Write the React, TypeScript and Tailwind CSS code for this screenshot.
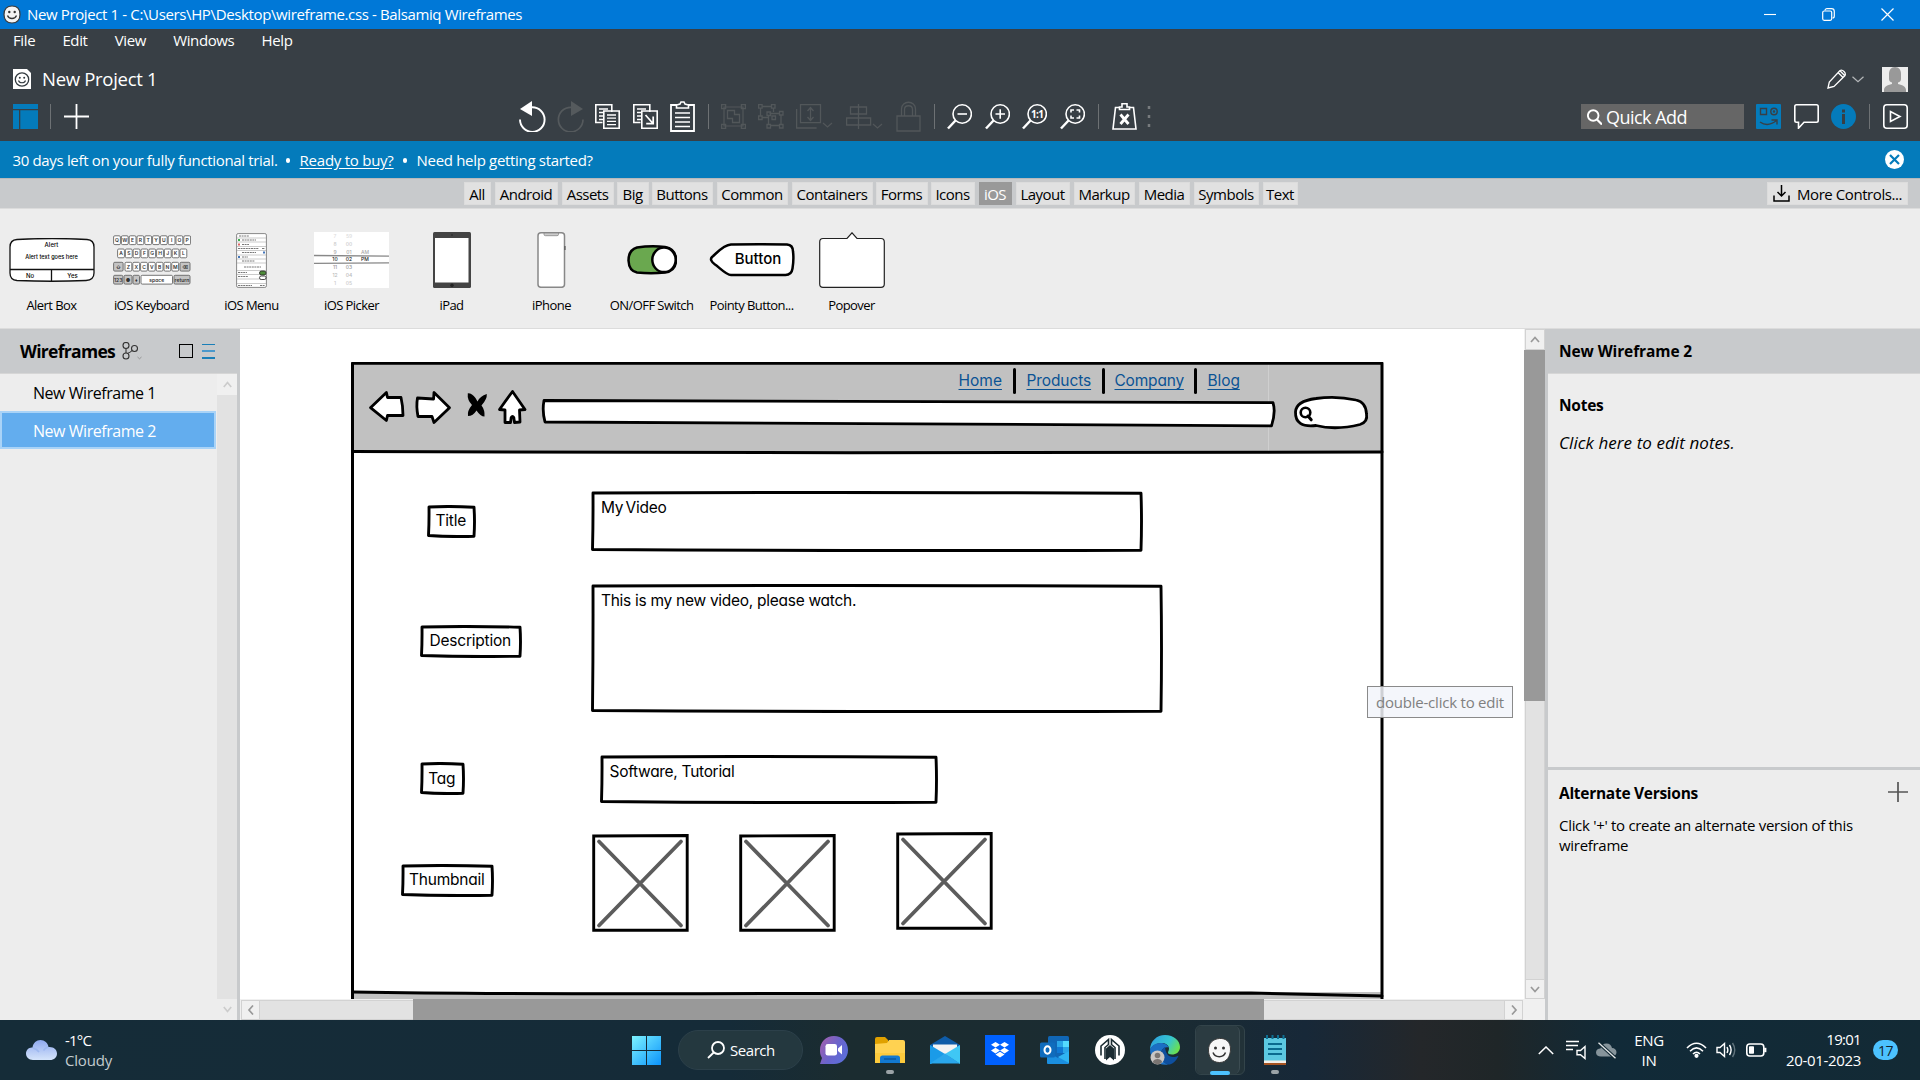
import type { ReactNode } from "react";

type Kids = { children?: ReactNode };

/* ---------- generic helpers ---------- */

function Ico({ w, h = 25, cls = "", children }: Kids & { w: number; h?: number; cls?: string }) {
  return (
    <svg
      width={w}
      height={h}
      viewBox={`0 0 ${w} ${h}`}
      fill="none"
      stroke="currentColor"
      strokeWidth="1.6"
      className={`shrink-0 ${cls}`}
    >
      {children}
    </svg>
  );
}

function Sep({ cls }: { cls: string }) {
  return <div className={`h-[25px] w-px shrink-0 bg-[#6d7174] ${cls}`} />;
}

function Smiley() {
  return (
    <svg width="18" height="19" viewBox="0 0 18 19" className="shrink-0">
      <path d="M9 1C14 1 17 4 17 9.500S14 18 9 18 1 15 1 9.500 4 1 9 1z" fill="#f4f4f4" stroke="#3a3a3a" strokeWidth="1.200" />
      <circle cx="6.300" cy="7" r="1.200" fill="#333" />
      <circle cx="11.700" cy="7" r="1.200" fill="#333" />
      <path d="M4.500 10.500c1.500 4 7.500 4 9 0" fill="none" stroke="#333" strokeWidth="1.300" />
    </svg>
  );
}

/* ---------- window header ---------- */

function TitleBar() {
  return (
    <div className="flex h-[29px] items-center bg-[#0078d7] pl-[3px] text-white">
      <Smiley />
      <span className="ml-[6px] text-[15px] tracking-[-0.37px]">
        New Project 1 - C:\Users\HP\Desktop\wireframe.css - Balsamiq Wireframes
      </span>
      <div className="ml-auto flex items-center gap-[46px] pr-[26px]">
        <Ico w={12} h={12}><path d="M0 5.500h12" strokeWidth="1.100" /></Ico>
        <Ico w={13} h={13}>
          <rect x="0.700" y="3" width="9" height="9.300" rx="1.500" strokeWidth="1.200" />
          <path d="M3 2.500C3 1.200 4 .7 5 .7h4.500C11.500.7 12.300 2 12.300 3.500V8c0 1-.8 2-1.800 2" strokeWidth="1.200" />
        </Ico>
        <Ico w={13} h={13}><path d="M.5.500l12 12M12.500.500l-12 12" strokeWidth="1.200" /></Ico>
      </div>
    </div>
  );
}

function MenuBar() {
  return (
    <div className="flex h-6 items-center gap-[27.200px] pb-[2px] pl-[13px] text-[15px] tracking-[-0.38px]">
      {["File", "Edit", "View", "Windows", "Help"].map((m) => (
        <span key={m}>{m}</span>
      ))}
    </div>
  );
}

function ProjectRow() {
  return (
    <div className="mt-[13px] flex h-[26px] items-center">
      <svg width="18" height="20" viewBox="0 0 18 20" className="ml-[13px]">
        <path d="M0 0h14l4 4v16H0z" fill="#fff" />
        <circle cx="9" cy="10.500" r="6.700" fill="#fff" stroke="#333b40" strokeWidth="1.300" />
        <circle cx="6.800" cy="8.700" r="1" fill="#333b40" />
        <circle cx="11.200" cy="8.700" r="1" fill="#333b40" />
        <path d="M5.500 11.500c1 3 6 3 7 0" fill="none" stroke="#333b40" strokeWidth="1.100" />
      </svg>
      <span className="ml-[11px] text-[18.500px] tracking-[-0.3px]">New Project 1</span>
      <Ico w={19} h={20} cls="ml-auto">
        <path d="M1 19l1.300-6L13 1.500q2-1 4 1t1 4L7 17.500zM11 3.500l4.800 4.800M13 1.800l4.600 4.700" strokeWidth="1.300" />
      </Ico>
      <Ico w={12} h={7} cls="ml-[6px]"><path d="M.5.800L6 5.800 11.500.800" stroke="#b5b8ba" strokeWidth="1.200" /></Ico>
      <svg width="26" height="25" viewBox="0 0 26 25" className="ml-[18px] mr-3">
        <path d="M0 0h26v25H0z" fill="#ededed" />
        <path d="M13 0c4 0 6 3 6 7v5c0 2-1 3-3 3.500v1.500c5 1 8 3 8 6v2H2v-2c0-3 3-5 8-6v-1.500C8 15 7 14 7 12V7c0-4 2-7 6-7z" fill="#999" />
      </svg>
    </div>
  );
}

function DocSheet() {
  return (
    <g>
      <path d="M7.500 18.500H.800V.800h16V8" />
      <path d="M4 5h9M4 8.500h4M4 12h4M4 15.500h4" strokeWidth="1.300" />
    </g>
  );
}

function ToolBar() {
  return (
    <div className="flex h-[49px] items-center">
      <svg width="25" height="25" viewBox="0 0 25 25" className="ml-[13px] shrink-0">
        <path d="M0 0h25v5H0zM0 6.300h6V25H0zM7.300 6.300H25V25H7.300z" fill="#047bbb" />
      </svg>
      <Sep cls="ml-3" />
      <Ico w={25} cls="ml-[13px]"><path d="M12.500 0v25M0 12.500h25" strokeWidth="1.800" /></Ico>

      <Ico w={27} h={31} cls="ml-[430px]">
        <path d="M13 0v15L1 8z" fill="currentColor" stroke="none" />
        <path d="M13 6.300A12.300 12.300 0 1 1 1 18.500" strokeWidth="1.900" />
      </Ico>
      <Ico w={27} h={31} cls="ml-[11px] text-[#555a5d]">
        <path d="M14 0v15L26 8z" fill="currentColor" stroke="none" />
        <path d="M14 6.300A12.300 12.300 0 1 0 26 18.500" strokeWidth="1.700" />
      </Ico>
      <Ico w={25} cls="ml-[11px]">
        <DocSheet />
        <path d="M8.800 7h15.400v17.200H8.800z" />
        <path d="M12 11h9M12 14.200h9M12 17.400h9M12 20.600h9" strokeWidth="1.300" />
      </Ico>
      <Ico w={25} cls="ml-[13px]">
        <DocSheet />
        <path d="M8.800 7h15.400v17.200H8.800z" />
        <path d="M12.500 11l7.500 8.500M20.200 12.500v7.200h-7" strokeWidth="1.700" />
      </Ico>
      <Ico w={25} h={31} cls="ml-3">
        <path d="M7 4H1v26h23V4h-6" strokeWidth="1.800" />
        <path d="M6.500 7V4L10 3l1-2h3l1 2 3.500 1v3z" />
        <path d="M5 12h15M5 16.500h15M5 21h15M5 25.500h15" />
      </Ico>
      <Sep cls="ml-[13px]" />

      <div className="ml-3 flex items-center text-[#52575a]">
        <Ico w={25}>
          <path d="M3 3h19v19H3z" strokeWidth="1.200" />
          <path d="M.6.600h4v4h-4zM20.400.600h4v4h-4zM.6 20.400h4v4h-4zM20.400 20.400h4v4h-4zM6.500 6.500h7v4h5v8h-7v-4h-5z" strokeWidth="1.300" />
        </Ico>
        <Ico w={26} cls="ml-3">
          <path d="M4 2.500h9M2.500 4v8M15.500 4v4M4 13.500h6M11.500 9.500h10M23 11v9M12 21.500h9M10.500 12v8" strokeWidth="1.300" />
          <path d="M.6.600h3.500v3.500H.6zM13.500.600H17v3.500h-3.500zM.6 12h3.500v3.500H.6zM21.500 7.500H25V11h-3.500zM21.500 20.500H25V24h-3.500zM9 20.500h3.500V24H9zM9 8h3.500v3.500H9zM14 12h3.500v3.500H14z" strokeWidth="1.300" />
        </Ico>
        <Ico w={37} cls="ml-3">
          <path d="M4.500.600h20v18h-20zM.6 5v19h20M14.500 4v12M11.500 7l3-3.500 3 3.500M11.500 13l3 3.500 3-3.500" strokeWidth="1.300" />
          <path d="M27 19l4.500 4 4.500-4" strokeWidth="1.200" />
        </Ico>
        <Ico w={37} cls="ml-[13px]">
          <path d="M12.500 0v25M4.500 3h16v7h-16zM.6 14h24v7H.6z" strokeWidth="1.300" />
          <path d="M27 20l4.500 4 4.500-4" strokeWidth="1.200" />
        </Ico>
        <Ico w={25} h={31} cls="ml-[13px]">
          <path d="M1 15h23v15H1zM5.500 15V8c0-9 14-9 14 0v7M8.500 15V8.500c0-5 8-5 8 0V15" strokeWidth="1.300" />
        </Ico>
      </div>
      <Sep cls="ml-[13px]" />

      {(["minus", "plus", "one", "fit"] as const).map((k, i) => (
        <Ico key={k} w={25} h={26} cls={i === 0 ? "ml-[12px]" : "ml-[12.500px]"}>
          <circle cx="15.200" cy="10" r="9.200" />
          <path d="M8.500 16.500L1 24.500" strokeWidth="2.500" />
          {k === "minus" && <path d="M10.500 10h9.500" />}
          {k === "plus" && <path d="M10.500 10h9.500M15.200 5.200v9.600" />}
          {k === "one" && (
            <text x="15.200" y="13.600" textAnchor="middle" fontSize="10" fontWeight="700" fill="currentColor" stroke="none" letterSpacing="-0.600">
              1:1
            </text>
          )}
          {k === "fit" && <path d="M11 8.500V6h3M16.500 6h3v2.500M19.500 11.500V14h-3M14 14h-3v-2.500" />}
        </Ico>
      ))}
      <Sep cls="ml-[13px]" />
      <Ico w={25} h={27} cls="ml-[13px]">
        <path d="M7 4.500H3.500L1 26h23L21.500 4.500H18" />
        <path d="M7.500 6.500V4H10V.800h5V4h2.500v2.500z" />
        <path d="M8.500 11.500l8 9.500M16.500 11.500l-8 9.500" strokeWidth="2.800" />
      </Ico>
      <Ico w={4} cls="ml-[10px] text-[#777b7e]">
        <path d="M2 2v3M2 11v3M2 20v3" strokeWidth="2.500" />
      </Ico>

      <div className="ml-auto flex h-[25px] w-[163px] items-center bg-[#666] pl-[6px]">
        <Ico w={15} h={16}>
          <circle cx="6.200" cy="6.500" r="5.300" strokeWidth="1.900" />
          <path d="M10 10.500l5 5" strokeWidth="2.200" />
        </Ico>
        <span className="ml-[4px] pt-[2px] text-[18px] tracking-[-0.53px]">Quick Add</span>
      </div>
      <svg width="25" height="25" viewBox="0 0 25 25" fill="none" stroke="#383f45" strokeWidth="1.400" className="ml-3">
        <rect width="25" height="25" rx="1" fill="#047bbb" stroke="none" />
        <path d="M4.500 4.500h6v6h-6z" />
        <circle cx="18" cy="7.500" r="3.200" />
        <circle cx="18" cy="7.500" r=".5" />
        <path d="M4 18c5 3.500 11 3 16.500-1.500M15.500 16h5.500v4.500" />
      </svg>
      <Ico w={25} cls="ml-[13px]">
        <path d="M2.500.800h20q1.700 0 1.700 1.700v14q0 1.700-1.700 1.700H10l-5.500 6v-6h-2Q.8 18.200.8 16.500v-14Q.8.800 2.500.800z" />
      </Ico>
      <svg width="25" height="25" viewBox="0 0 25 25" className="ml-3">
        <circle cx="12.500" cy="12.500" r="12.500" fill="#047bbb" />
        <path d="M11 5.500h3v3h-3zM11 10h3v10h-3z" fill="#383f45" />
      </svg>
      <Sep cls="ml-[13px]" />
      <Ico w={25} cls="ml-[13px] mr-3">
        <rect x=".8" y=".8" width="23.400" height="23.400" rx="3" />
        <path d="M7.500 7.500v10l9.500-5z" />
      </Ico>
    </div>
  );
}

function TrialBar() {
  return (
    <div className="flex h-[37px] items-center bg-[#047bbb] pl-[12.500px] pr-4 text-[15px] text-white">
      <span className="pt-px tracking-[-0.34px]">30 days left on your fully functional trial.</span>
      <i className="ml-[8px] mt-[2px] size-[4.500px] rounded-full bg-white" />
      <span className="ml-[9.500px] pt-px tracking-[-0.25px] underline underline-offset-2">Ready to buy?</span>
      <i className="ml-[9px] mt-[2px] size-[4.500px] rounded-full bg-white" />
      <span className="ml-[9.500px] pt-px tracking-[-0.32px]">Need help getting started?</span>
      <svg width="19" height="19" viewBox="0 0 19 19" className="ml-auto">
        <circle cx="9.500" cy="9.500" r="9.500" fill="#fff" />
        <path d="M5 5l9 9M14 5l-9 9" stroke="#047bbb" strokeWidth="2.200" />
      </svg>
    </div>
  );
}

const TABS: [string, string][] = [
  ["All", "w-[27px]"],
  ["Android", "ml-1 w-[63px]"],
  ["Assets", "ml-1 w-[52px]"],
  ["Big", "ml-[3px] w-8"],
  ["Buttons", "ml-[3px] w-[61px]"],
  ["Common", "ml-1 w-[71px]"],
  ["Containers", "ml-1 w-[81px]"],
  ["Forms", "ml-[3px] w-[52px]"],
  ["Icons", "ml-[3px] w-11"],
  ["iOS", "ml-1 w-[33px]"],
  ["Layout", "ml-1 w-[54px]"],
  ["Markup", "ml-1 w-[61px]"],
  ["Media", "ml-1 w-[51px]"],
  ["Symbols", "ml-1 w-[65px]"],
  ["Text", "ml-1 w-[35px]"],
];

function Tabs() {
  return (
    <div className="flex h-[31px] items-center border-b border-t border-b-[#dcdcdc] border-t-[#b7b9bb] bg-[#c8cacc] pl-[464px] text-[15px] tracking-[-0.5px]">
      {TABS.map(([t, c]) => (
        <div
          key={t}
          className={`flex h-[23px] shrink-0 items-center justify-center whitespace-nowrap pr-px pt-[2px] ${c} ${
            t === "iOS" ? "bg-[#999] text-white" : "border border-[#dcdcdc] bg-[#e1e1e1] text-black"
          }`}
        >
          {t}
        </div>
      ))}
      <div className="ml-auto mr-3 flex h-[23px] w-[141px] items-center border border-[#dcdcdc] bg-[#e1e1e1] pl-[4.500px]">
        <Ico w={17} h={17}><path d="M1 10.500V16h15v-5.500M8.500 0v10.500M4.500 7l4 4 4-4" strokeWidth="1.500" /></Ico>
        <span className="ml-[7.500px] pt-[2px] tracking-[-0.43px]">More Controls...</span>
      </div>
    </div>
  );
}

/* ---------- control library ---------- */

const INTER = "font-['Inter',sans-serif] [font-feature-settings:'cv11']";

function AlertThumb() {
  return (
    <svg width="86" height="44" viewBox="0 0 86 44" className={INTER}>
      <path d="M8 1.500Q43-.5 78 1.500 85 2 85 9v26q0 7-8 7.500Q43 44 8 42.500 1 42 1 35V9Q1 2 8 1.500z" fill="#fff" stroke="#111" strokeWidth="1.300" />
      <path d="M1 31.500h84M42.500 31.500V43" stroke="#111" strokeWidth="1.300" />
      <g fontSize="6" fontWeight="500" textAnchor="middle">
        <text x="42.500" y="9">Alert</text>
        <text x="42.500" y="20.500" fontSize="5.600">Alert text goes here</text>
        <text x="21" y="40">No</text>
        <text x="63.500" y="40">Yes</text>
      </g>
    </svg>
  );
}

function Key({ x, y, w = 6.8, t, dark }: { x: number; y: number; w?: number; t: string; dark?: boolean }) {
  return (
    <g>
      <rect x={x} y={y} width={w} height="8.800" rx="1.200" fill={dark ? "#c4c4c4" : "#fff"} stroke="#666" strokeWidth=".9" />
      <text x={x + w / 2} y={y + 6.300} textAnchor="middle" fontSize="5" fontWeight="600" fill="#333">{t}</text>
    </g>
  );
}

function KeyboardThumb() {
  return (
    <svg width="78" height="50" viewBox="0 0 78 50" className={INTER}>
      {"QWERTYUIOP".split("").map((k, i) => <Key key={k} x={0.6 + i * 7.8} y={0.8} t={k} />)}
      {"ASDFGHJKL".split("").map((k, i) => <Key key={k} x={4.6 + i * 7.8} y={14} t={k} />)}
      <Key x={0.6} y={27.3} w={9.500} t="⇧" dark />
      {"ZXCVBNM".split("").map((k, i) => <Key key={k} x={12 + i * 7.800} y={27.3} t={k} />)}
      <Key x={67} y={27.3} w={10} t="⌫" dark />
      <Key x={0.6} y={40.3} w={9.200} t="123" dark />
      <Key x={11} y={40.3} w={8} t="●" dark />
      <Key x={20} y={40.3} w={6.500} t="♦" dark />
      <Key x={28} y={40.3} w={31.500} t="space" />
      <Key x={61} y={40.3} w={16} t="return" dark />
    </svg>
  );
}

function MenuThumb() {
  return (
    <svg width="31" height="55" viewBox="0 0 31 55">
      <rect x=".6" y=".6" width="29.800" height="53.800" rx="1.500" fill="#fff" stroke="#888" />
      <path d="M1 5h29M1 9h29M1 13.500h29M1 17.500h29M1 22h29M1 26h29M1 30h29M1 37.500h29M1 41.500h29M1 46h29M1 50.500h29" stroke="#b5b5b5" strokeWidth=".7" />
      <path d="M3 3h10M6 7h14M6 11.500h7M2 15.500h21M26 15.500h3M6 19.500h14M6 24h6M6 28h13M8 34h17M2 39.500h9M2 43.500h10M2 52.500h14M24 52.500h5" stroke="#777" strokeDasharray="2 .6" strokeWidth="1" />
      <path d="M2 7h2" stroke="#3fae4c" strokeWidth="2" />
      <path d="M2 11.500h2" stroke="#d66" strokeWidth="2" />
      <path d="M2 24h2M27 19.500h2" stroke="#47b" strokeWidth="2" />
      <rect x="23.500" y="38" width="6.500" height="4" rx="2" fill="#4d8b39" stroke="#222" strokeWidth=".8" />
      <rect x="23.500" y="43" width="6.500" height="3.500" rx="1.700" fill="#fff" stroke="#222" strokeWidth=".8" />
    </svg>
  );
}

function PickerThumb() {
  const rows: [string, string, string, string][] = [
    ["7", "59", "", "#ddd"],
    ["8", "00", "", "#ccc"],
    ["9", "01", "AM", "#aaa"],
    ["10", "02", "PM", "#222"],
    ["11", "03", "", "#999"],
    ["12", "04", "", "#bbb"],
    ["1", "05", "", "#ccc"],
  ];
  return (
    <svg width="75" height="56" viewBox="0 0 75 56" className={INTER}>
      <path d="M0 0h75v56H0z" fill="#fff" />
      <path d="M0 23.500l75 .7M0 31.300l75-.5" stroke="#888" strokeWidth="1.300" />
      {rows.map(([a, b, c, col], i) => (
        <g key={a} fontSize="5" fontWeight="500" fill={col} textAnchor="middle">
          <text x="21" y={6 + i * 7.750}>{a}</text>
          <text x="35" y={6 + i * 7.750}>{b}</text>
          <text x="51" y={6 + i * 7.750}>{c}</text>
        </g>
      ))}
    </svg>
  );
}

const THUMBS: [string, ReactNode][] = [
  ["Alert Box", <AlertThumb key="a" />],
  ["iOS Keyboard", <KeyboardThumb key="k" />],
  ["iOS Menu", <MenuThumb key="m" />],
  ["iOS Picker", <PickerThumb key="p" />],
  [
    "iPad",
    <svg key="i" width="38" height="56" viewBox="0 0 38 56">
      <rect width="38" height="56" rx="1.500" fill="#444" />
      <path d="M2 6h33.500v44.500H2z" fill="#fff" />
      <circle cx="19" cy="3" r=".8" fill="#222" />
      <circle cx="19" cy="53.300" r="1.700" fill="#222" />
    </svg>,
  ],
  [
    "iPhone",
    <svg key="h" width="29" height="56" viewBox="0 0 29 56">
      <rect x="1" y=".8" width="26.500" height="54.500" rx="3" fill="#fff" stroke="#888" strokeWidth="1.500" />
      <path d="M7 1v1.500q0 1.200 1.500 1.200h11.500q1.500 0 1.500-1.200V1z" fill="#ccc" stroke="#888" strokeWidth=".8" />
      <path d="M28 14v4" stroke="#444" />
    </svg>,
  ],
  [
    "ON/OFF Switch",
    <svg key="s" width="50" height="30" viewBox="0 0 50 30">
      <path d="M10 2.500Q24 .5 38 2q11 2 11 13 0 11-11 12.500-14 1.500-28 0Q2 26 1.500 15.500 1.500 5 10 2.500z" fill="#6aa84f" stroke="#000" strokeWidth="2.500" />
      <ellipse cx="37" cy="14.800" rx="11.700" ry="12.300" fill="#fff" stroke="#000" strokeWidth="2.500" />
    </svg>,
  ],
  [
    "Pointy Button...",
    <svg key="b" width="86" height="34" viewBox="0 0 86 34" className={INTER}>
      <path d="M22 1.500Q50 1 78 1.500q6 .5 6 7 1 8-.5 17-1 6.500-7 6.500H22C17 32 10 24 6 21.500Q0 17 3 14C8 10 14 2 22 1.500z" fill="#fff" stroke="#000" strokeWidth="2.500" />
      <text x="49" y="21" textAnchor="middle" fontSize="15" fontWeight="500" letterSpacing="0">Button</text>
    </svg>,
  ],
  [
    "Popover",
    <svg key="o" width="66" height="56" viewBox="0 0 66 56">
      <path d="M4 6.500h24L33 .8l5 5.700h24q3.300 0 3.300 3.500v42q0 3.300-3.300 3.300H4Q.7 55.300.7 52V10Q.7 6.500 4 6.500z" fill="#fff" stroke="#222" strokeWidth="1.200" />
    </svg>,
  ],
];

function Library() {
  return (
    <div className="flex h-[120px] border-b border-[#dcdcdc] bg-[#ededed] pl-[1.500px] text-black">
      {THUMBS.map(([label, art]) => (
        <div key={label} className="flex w-[100px] shrink-0 flex-col items-center">
          <div className="mt-[23px] flex h-14 items-center justify-center">{art}</div>
          <span className="mt-[7px] whitespace-nowrap text-[13px] leading-5 tracking-[-0.56px]">{label}</span>
        </div>
      ))}
    </div>
  );
}

/* ---------- left panel ---------- */

function Navigator() {
  return (
    <aside className="flex w-[240px] shrink-0 flex-col border-r-[3px] border-[#c8cacc] bg-[#ededed]">
      <div className="flex h-[45px] shrink-0 items-center border-b border-[#d6d6d6] bg-[#c8cacc] pl-5">
        <span className="pt-px text-[17.500px] font-bold tracking-[-0.7px]">Wireframes</span>
        <Ico w={20} h={18} cls="ml-[7px] text-[#333]">
          <circle cx="4" cy="3.500" r="3" strokeWidth="1.100" />
          <circle cx="12.500" cy="6.500" r="3" strokeWidth="1.100" />
          <circle cx="4" cy="14" r="3" strokeWidth="1.100" />
          <path d="M4 6.500V11M5.500 11.500Q9 10 10 8.500" strokeWidth="1.100" />
          <path d="M15.500 15l2 1.800 2-1.800" strokeWidth=".8" stroke="#888" />
        </Ico>
        <div className="ml-[37px] size-[14px] border-[1.500px] border-black" />
        <div className="ml-[9px] flex flex-col gap-[5px]">
          <div className="h-[1.500px] w-[13px] bg-[#1a7fb8]" />
          <div className="h-[2px] w-[13px] bg-[#4a98cb]" />
          <div className="h-[1.500px] w-[13px] bg-[#1a7fb8]" />
        </div>
      </div>
      <div className="flex flex-1">
        <div className="flex flex-1 flex-col text-[16px] tracking-[-0.46px]">
          <div className="flex h-[37px] items-center pl-[33px] pt-px">New Wireframe 1</div>
          <div className="mr-px flex h-[38px] items-center border-2 border-[#a9d3f7] bg-[#63adee] pl-[31px] pt-px text-white">
            New Wireframe 2
          </div>
        </div>
        <div className="flex w-5 flex-col items-center">
          <div className="flex h-[21px] w-full items-center justify-center bg-[#f0f0f0]">
            <Ico w={9} h={7} cls="text-[#ccc]"><path d="M.8 6L4.500 1.500 8.200 6" strokeWidth="1.700" /></Ico>
          </div>
          <div className="w-full flex-1 bg-[#e2e2e2]" />
          <div className="flex h-[21px] items-center justify-center">
            <Ico w={9} h={7} cls="text-[#ccc]"><path d="M.8 1L4.500 5.500 8.200 1" strokeWidth="1.700" /></Ico>
          </div>
        </div>
      </div>
    </aside>
  );
}

/* ---------- drawing canvas ---------- */

function Frame({ w, h }: { w: number; h: number }) {
  return (
    <svg width={w} height={h} viewBox={`0 0 ${w} ${h}`} className="absolute inset-0">
      <path
        d={`M2 2 Q${w * 0.45} .8 ${w - 2} 2.200 Q${w - 1} ${h / 2} ${w - 2} ${h - 1.800} Q${w * 0.5} ${h - 0.800} 1.500 ${h - 2.500} Q2.200 ${h / 2} 2 2z`}
        fill="#fff"
        stroke="#000"
        strokeWidth="2.900"
        strokeLinejoin="round"
      />
    </svg>
  );
}

function Label({ w, h, cls, children }: Kids & { w: number; h: number; cls: string }) {
  return (
    <div className={`absolute flex items-center justify-center pb-px pr-[1.500px] ${cls}`}>
      <Frame w={w} h={h} />
      <span className="relative">{children}</span>
    </div>
  );
}

function Area({ w, h, cls, children }: Kids & { w: number; h: number; cls: string }) {
  return (
    <div className={`absolute whitespace-nowrap pl-[10px] pt-[5px] ${cls}`}>
      <Frame w={w} h={h} />
      <span className="relative">{children}</span>
    </div>
  );
}

function ImageBox({ cls }: { cls: string }) {
  return (
    <svg width="97" height="98" viewBox="0 0 97 98" className={`absolute ${cls}`}>
      <path d="M1.700 2L95.200 1.500V96.300H1.700z" fill="#fff" stroke="#000" strokeWidth="2.900" />
      <path d="M7 7.500l82 84M89 7.500l-82 84" stroke="#5c5c5c" strokeWidth="3.800" strokeLinecap="round" />
    </svg>
  );
}

function BrowserDrawing() {
  return (
    <svg width="1034" height="637" viewBox="0 0 1034 637" className="absolute left-[111px] top-[33px]" strokeLinejoin="round" strokeLinecap="round">
      <path d="M1 1h1030v90H1z" fill="#c1c1c1" />
      <path d="M1 630h1030v10H1z" fill="#c1c1c1" />
      <path d="M917.500 0v91" stroke="#cfcfcf" />
      <g fill="none" stroke="#000" strokeWidth="3">
        <path d="M1.500 640V1.200L1031 1.200V640" />
        <path d="M2 89.500Q200 91 500 90.800T1031 90" />
        <path d="M2 630Q150 632.500 450 631.500T900 631L1031 634" />
      </g>
      <g fill="#fff" stroke="#000" strokeWidth="2.800">
        <path d="M19.500 45.700L35.400 30.500 36.500 35.500 50 35.500Q52 44 52 53.500L36.500 53.500 35.400 58.500z" />
        <path d="M98.500 45.700L83 30.500 82.600 37 66.500 36Q65 44 67 54.500L81 54.500 83 60.500z" />
        <path d="M161.500 29.500Q166 36 174 47.500L168.500 48 169 60 163.500 60.500 162.800 55.500Q161.500 53.500 160.200 55.500L159.500 60.500 154 60.500 154 48 148.500 47.500Q156 37 161.500 29.500z" />
        <path d="M193 38.500Q550 38.500 922 40.700 925 50 920.500 63.800 560 63.500 194 60 191 49 193 38.500z" />
        <path d="M965 36.500Q985 33.500 1005 38 1015 40 1015.500 52 1017 60 1009 62.500 985 68.500 965 63.500 944 66 944.500 50 945 39 965 36.500z" />
      </g>
      <path d="M116.800 31.200Q121 31 124.500 36L126.500 39.500Q129 34 135.800 32Q136.300 37 130.500 43.500Q134 48 133.500 54.500Q129.500 54.500 125.500 48.500Q122 54 117 54Q116 49 121 43Q116 38 116.800 31.200z" fill="#000" />
      <circle cx="954.500" cy="50.500" r="4.800" fill="none" stroke="#000" strokeWidth="2.600" />
      <path d="M957 54l3.200 3.800" stroke="#000" strokeWidth="3" />
    </svg>
  );
}

function Canvas() {
  return (
    <div className={`relative h-[670px] w-[1284px] overflow-hidden bg-white text-[15.500px] leading-6 tracking-[-0.22px] text-black ${INTER}`}>
      <BrowserDrawing />
      <div className="absolute left-[718.500px] top-[39px] flex h-[26px] items-center text-[#0b5394]">
        <span className="w-[44px] underline underline-offset-[3px] [letter-spacing:0]">Home</span>
        <i className="mx-[10.500px] h-[26px] w-[3px] rounded-full bg-black" />
        <span className="w-[65px] tracking-[-0.1px] underline underline-offset-[3px]">Products</span>
        <i className="mx-[10.500px] h-[26px] w-[3px] rounded-full bg-black" />
        <span className="-ml-px w-[69px] tracking-[-0.2px] underline underline-offset-[3px]">Company</span>
        <i className="mx-[10.500px] h-[26px] w-[3px] rounded-full bg-black" />
        <span className="tracking-[-0.1px] underline underline-offset-[3px]">Blog</span>
      </div>

      <Label w={49} h={33} cls="left-[187px] top-[176px] h-[33px] w-[49px]">Title</Label>
      <Area w={552} h={61} cls="left-[351px] top-[162px] h-[61px] w-[552px] [word-spacing:-2px]">My Video</Area>
      <Label w={102} h={33} cls="left-[180px] top-[296px] h-[33px] w-[102px]">Description</Label>
      <Area w={572} h={129} cls="left-[351px] top-[255px] h-[129px] w-[572px] [letter-spacing:-0.28px]">
        This is my new video, please watch.
      </Area>
      <Label w={45} h={33} cls="left-[180px] top-[433px] h-[33px] w-[45px] !pb-0">Tag</Label>
      <Area w={338} h={49} cls="left-[359.500px] top-[426px] h-[49px] w-[338px] [letter-spacing:-0.3px]">Software, Tutorial</Area>
      <Label w={93} h={33} cls="left-[161px] top-[535px] h-[33px] w-[93px] !pb-[2px]">Thumbnail</Label>
      <ImageBox cls="left-[351.500px] top-[504.500px]" />
      <ImageBox cls="left-[499px] top-[504.500px]" />
      <ImageBox cls="left-[655.500px] top-[503px]" />

      <div className="absolute left-[1127px] top-[357px] flex h-[32px] w-[146px] items-center justify-center border border-[#8a8a8a] bg-[#f2f4fa]/85 font-['Open_Sans',sans-serif] text-[15px] tracking-[-0.22px] text-[#808080]">
        double-click to edit
      </div>
    </div>
  );
}

const ARROWS = { up: "M1 7l4-4.500L9 7", down: "M1 3l4 4.500L9 3", left: "M7 .5L3 5l4 4.500", right: "M3 .5L7 5 3 9.500" };

function ScrollButton({ dir, cls }: { dir: keyof typeof ARROWS; cls: string }) {
  return (
    <div className={`flex shrink-0 items-center justify-center border border-[#d2d2d2] bg-[#f0f0f0] text-[#999] ${cls}`}>
      <Ico w={10} h={10}><path d={ARROWS[dir]} strokeWidth="1.700" /></Ico>
    </div>
  );
}

function Workspace() {
  return (
    <main className="flex w-[1308px] shrink-0 flex-col border-r-[3px] border-[#c8cacc] bg-[#f0f0f0]">
      <div className="flex">
        <Canvas />
        <div className="flex w-[21px] flex-col items-center">
          <ScrollButton dir="up" cls="h-[21px] w-[20px]" />
          <div className="h-[351px] w-full bg-[#999]" />
          <div className="w-[20px] flex-1 border-x border-[#d2d2d2] bg-[#e2e2e2]" />
          <ScrollButton dir="down" cls="h-[20px] w-[20px]" />
        </div>
      </div>
      <div className="flex h-[21px] items-center pl-px">
        <ScrollButton dir="left" cls="h-[20px] w-[19px]" />
        <div className="h-[20px] w-[153px] border-y border-[#d2d2d2] bg-[#e2e2e2]" />
        <div className="h-[21px] w-[851px] bg-[#999]" />
        <div className="h-[20px] w-[240px] border-y border-[#d2d2d2] bg-[#e2e2e2]" />
        <ScrollButton dir="right" cls="h-[20px] w-[19px]" />
      </div>
    </main>
  );
}

/* ---------- right panel ---------- */

function Inspector() {
  return (
    <aside className="flex flex-1 flex-col bg-[#ededed] text-black">
      <div className="flex h-[45px] items-center border-b border-[#d6d6d6] bg-[#c8cacc] pl-[11px] pt-px text-[15.500px] font-bold tracking-[-0.1px]">
        New Wireframe 2
      </div>
      <div className="h-[393px] pl-[11px] pt-[19px]">
        <div className="text-[15.500px] font-bold leading-6 tracking-[-0.25px]">Notes</div>
        <div className="mt-[14px] text-[17px] italic leading-6 tracking-[0.07px]">Click here to edit notes.</div>
      </div>
      <div className="flex-1 border-t-[3px] border-[#c8cacc] pl-[11px] pr-3">
        <div className="mt-[10px] flex h-6 items-center justify-between">
          <span className="pt-[3px] text-[15.500px] font-bold tracking-[-0.28px]">Alternate Versions</span>
          <Ico w={20} h={20} cls="text-[#555]"><path d="M10 0v20M0 10h20" strokeWidth="1.700" /></Ico>
        </div>
        <p className="mt-[11px] text-[15px] leading-5 tracking-[-0.3px]">
          Click '+' to create an alternate version of this
          <br />
          wireframe
        </p>
      </div>
    </aside>
  );
}

/* ---------- taskbar ---------- */

function WindowsLogo() {
  return (
    <svg width="29" height="29" viewBox="0 0 29 29" className="ml-[520px] shrink-0">
      <defs>
        <linearGradient id="win" x1="0" y1="0" x2="29" y2="29" gradientUnits="userSpaceOnUse">
          <stop stopColor="#7df3ff" />
          <stop offset="1" stopColor="#0b93fb" />
        </linearGradient>
      </defs>
      <path d="M0 0h14v14H0zM15 0h14v14H15zM0 15h14v14H0zM15 15h14v14H15z" fill="url(#win)" />
    </svg>
  );
}

function AppIcon({ cls = "", mark, children }: Kids & { cls?: string; mark?: boolean }) {
  return (
    <div className={`relative flex size-[30px] shrink-0 items-center justify-center ${cls}`}>
      {children}
      {mark && <div className="absolute -bottom-[9px] left-[11px] h-1 w-2 rounded-full bg-[#9ba3a7]" />}
    </div>
  );
}

function Taskbar() {
  return (
    <footer className="flex h-[60px] items-center bg-[linear-gradient(90deg,#152c38_0%,#152b38_38%,#1b2c30_44%,#1b2c32_60%,#172838_68%,#24272a_74%,#1f2628_78%,#112a38_84%,#132a35_100%)] text-white">
      <svg width="31" height="20" viewBox="0 0 31 20" className="ml-[26px] shrink-0">
        <defs>
          <linearGradient id="cl" x1="0" y1="0" x2="0" y2="1">
            <stop stopColor="#8fa9ef" />
            <stop offset="1" stopColor="#d5e4fb" />
          </linearGradient>
        </defs>
        <path d="M7 20C2.500 20 0 17 0 13.500S3 7 6.500 7.500C7 3 10.500 0 14.500 0S22 3 22.500 7C27.500 6.500 31 9.500 31 13.500S28 20 24 20z" fill="url(#cl)" />
        <path d="M7 8q4 1 6 4M22 7q-3 1-4.500 3.500" fill="none" stroke="#9db8f0" strokeWidth="1.500" />
      </svg>
      <div className="ml-[8px] w-[47px] text-[15px] leading-5 tracking-[-0.2px]">
        <div className="tracking-[-0.8px]">-1°C</div>
        <div className="text-[#c3cbcf]">Cloudy</div>
      </div>
      <WindowsLogo />
      <div className="ml-[17px] flex h-10 w-[125px] shrink-0 items-center rounded-full border border-[#2c404a] bg-[#24383f] pl-[28px]">
        <Ico w={18} h={18}>
          <circle cx="11" cy="7" r="6" strokeWidth="1.800" />
          <path d="M6.700 11.500L1 17" strokeWidth="1.800" />
        </Ico>
        <span className="ml-[5px] text-[15px] tracking-[-0.45px]">Search</span>
      </div>

      <AppIcon cls="ml-[16px]">
        <svg width="30" height="30" viewBox="0 0 30 30">
          <defs>
            <linearGradient id="chat" x1="0" y1=".2" x2="1" y2=".8">
              <stop stopColor="#a05fae" />
              <stop offset=".5" stopColor="#6a64cc" />
              <stop offset="1" stopColor="#5a70dc" />
            </linearGradient>
          </defs>
          <path d="M15 1c8 0 14 6 14 14s-6 14-14 14H1l2-6C1 20 1 17 1 15 1 7 7 1 15 1z" fill="url(#chat)" />
          <rect x="6.500" y="9" width="11.500" height="11.500" rx="2.300" fill="#fff" />
          <path d="M19 13.500L23 10v9.500L19 16z" fill="#fff" />
        </svg>
      </AppIcon>
      <AppIcon cls="ml-[26px]" mark>
        <svg width="30" height="30" viewBox="0 0 30 30">
          <path d="M0 4q0-2 2-2h8l3 3v5H0z" fill="#e0a100" />
          <path d="M0 9l12-1 2-3h14q2 0 2 2v21H0z" fill="#ffd251" />
          <path d="M0 18h30v10H0z" fill="#fbc52f" opacity=".6" />
          <path d="M5 28v-5q0-2.500 2.500-2.500h15q2.500 0 2.500 2.500v5z" fill="#1279d1" />
          <path d="M9 24h12" stroke="#0a4f94" strokeWidth="1.200" />
        </svg>
      </AppIcon>
      <AppIcon cls="ml-[25px]">
        <svg width="30" height="30" viewBox="0 0 30 30">
          <path d="M0 10L15 1l15 9v4H0z" fill="#0f5ca8" />
          <path d="M3 9.500h24v11H3z" fill="#f3f3f3" />
          <path d="M0 10l15 9-14 10H0z" fill="#1a9be8" />
          <path d="M30 10L15 19 30 29z" fill="#3fc7f5" />
          <path d="M0 28.500L15 18.500 30 28.500z" fill="#2aa7ec" />
        </svg>
      </AppIcon>
      <AppIcon cls="ml-[25px] bg-[#0061ff]">
        <svg width="18" height="18" viewBox="0 0 18 18" fill="#fff">
          <path d="M4.500 1L9 3.800 4.500 6.600 0 3.800zM13.500 1L18 3.800 13.500 6.600 9 3.800zM4.500 6.800L9 9.600l-4.500 2.800L0 9.600zM13.500 6.800L18 9.600l-4.500 2.800L9 9.600zM9 10.800l4.500 2.800L9 16.600l-4.500-3z" />
        </svg>
      </AppIcon>
      <AppIcon cls="ml-[25px]">
        <svg width="30" height="30" viewBox="0 0 30 30">
          <rect x="8" y="1" width="21" height="26" rx="1.500" fill="#1066b5" />
          <path d="M17 6h6v6h-6z" fill="#2aa5e8" />
          <path d="M23 6h6v6h-6z" fill="#54daff" />
          <path d="M17 12h6v6h-6z" fill="#0f78d4" />
          <path d="M23 12h6v6h-6z" fill="#2aa5e8" />
          <path d="M7 28V17l11 6 11-7v12q0 1-1 1H8q-1 0-1-1z" fill="#1b8fe0" />
          <path d="M29 16v12L18 22z" fill="#2fb4f2" />
          <rect x="0" y="7.500" width="15" height="15" rx="1.500" fill="#0f6cbd" />
          <ellipse cx="7.500" cy="15" rx="3" ry="3.700" fill="none" stroke="#fff" strokeWidth="2" />
        </svg>
      </AppIcon>
      <AppIcon cls="ml-[25px]">
        <svg width="30" height="30" viewBox="0 0 30 30">
          <circle cx="15" cy="15" r="15" fill="#fff" />
          <path d="M6 20.500v-9.500L13.500 4.500v5L10 12.500v11.500M24 20.500v-9.500L16.500 4.500v5L20 12.500v11.500" fill="none" stroke="#1b2c32" strokeWidth="1.600" />
          <path d="M11 25.500V13.500L15 10l4 3.500v12L15 22z" fill="#1b2c32" />
        </svg>
      </AppIcon>
      <AppIcon cls="ml-[25px]">
        <svg width="30" height="30" viewBox="0 0 30 30">
          <defs>
            <linearGradient id="eg" x1="0" y1=".2" x2="1" y2=".6">
              <stop stopColor="#2c9fe0" />
              <stop offset=".6" stopColor="#36c6cf" />
              <stop offset="1" stopColor="#6be04e" />
            </linearGradient>
          </defs>
          <path d="M15 0c9 0 15 6 15 12 0 5-4 7.500-8 7.500-3 0-4-1-4-2s1-2 1-4c0-3-3-5.500-7-5.500C6 8 1.500 11 0 15 0 6 7 0 15 0z" fill="url(#eg)" />
          <path d="M0 15c1-4 5-7 10.500-7 4 0 7.500 2 8 4.500C14 11.500 11 15 11 19c0 5 3 9 7 10.500C8 31 0 24 0 15z" fill="#1b6fc4" />
          <path d="M11 19c0-3 1.500-5.500 4-7 .5 6 3 10 8 10 2 0 4-.5 5.500-1.300C26 27 21.500 30 17.500 29.500 13.500 28 11 24 11 19z" fill="#0e4f9e" />
          <circle cx="7.500" cy="22.500" r="7" fill="#c9c6c4" />
          <circle cx="7.500" cy="20.500" r="2.800" fill="#7a7572" />
          <path d="M2.800 27c1-4 8.400-4 9.400 0-2 3-7.400 3-9.400 0z" fill="#7a7572" />
        </svg>
      </AppIcon>
      <div className="ml-[15px] flex h-[50px] w-[50px] shrink-0 rounded-md border border-[#33444a] bg-[#223238]">
        <div className="relative flex h-full w-[44px] items-center justify-center rounded-md border-r border-[#3c4c52] bg-[#2b3b41] pl-[4px]">
          <svg width="25" height="27" viewBox="0 0 25 27">
            <path d="M12.500 1.500C19 1 23.500 5 23.500 12S20 25.500 12.500 25.500 1.500 20 1.500 13 6 2 12.500 1.500z" fill="#f7f7f7" stroke="#3b3b3b" strokeWidth="1" />
            <circle cx="8.500" cy="11" r="1.500" fill="#333" />
            <circle cx="16.500" cy="11" r="1.500" fill="#333" />
            <path d="M6 15.500c2 5.500 10.500 5.500 12.500 0" fill="none" stroke="#333" strokeWidth="1.500" />
          </svg>
          <div className="absolute -bottom-px left-[14px] h-1 w-5 rounded-full bg-[#4cc2ff]" />
        </div>
      </div>
      <AppIcon cls="ml-[15px]" mark>
        <svg width="22" height="30" viewBox="0 0 22 30">
          <path d="M0 3h22v25H0z" fill="#5cc8e0" />
          <path d="M0 25.500h22V28H0z" fill="#f2efe9" />
          <path d="M0 28h22v2H0z" fill="#a65321" />
          <path d="M3 0v4M8.500 0v4M14 0v4M19.500 0v4" stroke="#0e6f92" strokeWidth="2" />
          <path d="M4 9h14M4 14h14M4 19h14" stroke="#0a6a8e" strokeWidth="1.800" />
        </svg>
      </AppIcon>

      <Ico w={16} h={9} cls="ml-auto"><path d="M.8 8L8 1l7.200 7" strokeWidth="1.500" /></Ico>
      <Ico w={20} h={20} cls="ml-[12px]">
        <path d="M0 1.500h13M0 5.500h12M0 9.500h7" strokeWidth="1.400" />
        <path d="M11 10.500h3.500L19 6.500v12l-4.500-3.800H11z" strokeWidth="1.400" />
      </Ico>
      <svg width="21" height="17" viewBox="0 0 21 17" className="ml-[10px] shrink-0">
        <path d="M5 14.500c-3 0-5-1.500-5-4s2-4 4.500-4C5 3.500 7.500 1.500 10.500 1.500s5 2 5.500 4.500c2.500 0 4.500 1.800 4.500 4.200s-2 4.300-4.500 4.300z" fill="#86949b" />
        <path d="M2.500.800l17 15.500" stroke="#132a35" strokeWidth="3.500" />
        <path d="M2.500.800l17 15.500" stroke="#e6e9ea" strokeWidth="1.300" />
      </svg>
      <div className="ml-[17px] w-[30px] text-center text-[15px] leading-5 tracking-[-0.3px]">
        <div>ENG</div>
        <div>IN</div>
      </div>
      <Ico w={21} h={16} cls="ml-[22px]">
        <path d="M1 6Q10.500-3.500 20 6M4 9.200q6.500-6.700 13 0M7 12q3.500-3.600 7 0" strokeWidth="1.600" />
        <circle cx="10.500" cy="13.800" r="1.300" fill="currentColor" />
      </Ico>
      <Ico w={20} h={16} cls="ml-[9px]">
        <path d="M1 5.500h3L8.500 1.500v13L4 10.500H1z" strokeWidth="1.400" />
        <path d="M11 5q1.700 3 0 6M13.500 3q3.200 5 0 10" strokeWidth="1.400" />
        <path d="M16.500 1q4.500 7 0 14" stroke="#61737c" strokeWidth="1.400" />
      </Ico>
      <Ico w={21} h={14} cls="ml-[10px]">
        <rect x=".8" y="1" width="17" height="12" rx="3" />
        <rect x="3" y="3.300" width="5" height="7.500" rx=".8" fill="currentColor" stroke="none" />
        <path d="M19.300 4.800v4.400" strokeWidth="2.200" />
      </Ico>
      <div className="ml-[18px] w-[76px] text-right text-[15px] leading-5 tracking-[-0.33px]">
        <div className="-mt-px mb-px tracking-[-0.7px]">19:01</div>
        <div>20-01-2023</div>
      </div>
      <div className="ml-[12px] mr-[22px] flex h-5 w-[25px] shrink-0 items-center justify-center rounded-full bg-[#4cc2ff] text-[14px] tracking-[-0.4px] text-[#12222b]">
        17
      </div>
    </footer>
  );
}

export default function App() {
  return (
    <div className="flex h-[1080px] w-[1920px] flex-col overflow-hidden bg-white font-['Open_Sans','Noto_Sans',sans-serif] text-black">
      <TitleBar />
      <header className="h-[112px] bg-[#383f45] text-white">
        <MenuBar />
        <ProjectRow />
        <ToolBar />
      </header>
      <TrialBar />
      <Tabs />
      <Library />
      <div className="flex h-[691px]">
        <Navigator />
        <Workspace />
        <Inspector />
      </div>
      <Taskbar />
    </div>
  );
}
